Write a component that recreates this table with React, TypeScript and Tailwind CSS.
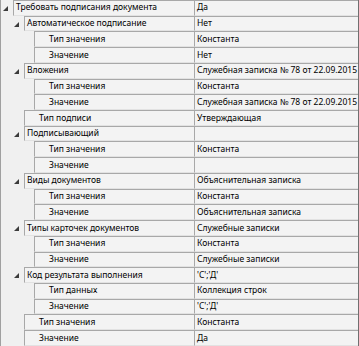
import React from 'react';

type Row = { level: number; label: string; value: string; expandable?: boolean };

const rows: Row[] = [
  { level: 0, label: 'Требовать подписания документа', value: 'Да', expandable: true },
  { level: 1, label: 'Автоматическое подписание', value: 'Нет', expandable: true },
  { level: 2, label: 'Тип значения', value: 'Константа' },
  { level: 2, label: 'Значение', value: 'Нет' },
  { level: 1, label: 'Вложения', value: 'Служебная записка № 78 от 22.09.2015', expandable: true },
  { level: 2, label: 'Тип значения', value: 'Константа' },
  { level: 2, label: 'Значение', value: 'Служебная записка № 78 от 22.09.2015' },
  { level: 1, label: 'Тип подписи', value: 'Утверждающая' },
  { level: 1, label: 'Подписывающий', value: '', expandable: true },
  { level: 2, label: 'Тип значения', value: 'Константа' },
  { level: 2, label: 'Значение', value: '' },
  { level: 1, label: 'Виды документов', value: 'Объяснительная записка', expandable: true },
  { level: 2, label: 'Тип значения', value: 'Константа' },
  { level: 2, label: 'Значение', value: 'Объяснительная записка' },
  { level: 1, label: 'Типы карточек документов', value: 'Служебные записки', expandable: true },
  { level: 2, label: 'Тип значения', value: 'Константа' },
  { level: 2, label: 'Значение', value: 'Служебные записки' },
  { level: 1, label: 'Код результата выполнения', value: "'С';'Д'", expandable: true },
  { level: 2, label: 'Тип данных', value: 'Коллекция строк' },
  { level: 2, label: 'Значение', value: "'С';'Д'" },
  { level: 1, label: 'Тип значения', value: 'Константа' },
  { level: 1, label: 'Значение', value: 'Да' },
];

const indent = ['w-[12px]', 'w-[23px]', 'w-[33px]'];

function Expander() {
  return (
    <svg width="5" height="5" viewBox="0 0 5 5" className="block">
      <polygon points="5,0 5,5 0,5" fill="#3c3c3c" />
    </svg>
  );
}

function PropRow({ row }: { row: Row }) {
  return (
    <div className="flex h-[15.727px] shrink-0">
      <div className={`${indent[row.level]} shrink-0 flex items-center justify-end pr-[5px] pt-[1px]`}>
        {row.expandable && <Expander />}
      </div>
      <div
        className={`w-0 flex-1 flex items-center border-l border-t border-b border-[#a8a8a8] border-b-[#e2e2e2] bg-[#f3f3f3] whitespace-nowrap overflow-hidden ${
          row.expandable ? 'pl-[2px]' : 'pl-[14px]'
        }`}
      >
        {row.label}
      </div>
      <div className="w-[164px] shrink-0 flex items-center border-l border-t border-b border-[#a8a8a8] border-b-[#e2e2e2] bg-[#f3f3f3] pl-[2px] whitespace-nowrap overflow-hidden">
        {row.value}
      </div>
    </div>
  );
}

export default function App() {
  return (
    <div
      className="w-[359px] h-[346px] overflow-hidden flex flex-col bg-[#f0f0f0] border-l border-r border-l-[#a0a0a0] border-r-[#707070] text-[8.5px] text-black"
      style={{ fontFamily: '"Noto Sans", "Liberation Sans", sans-serif' }}
    >
      {rows.map((row, i) => (
        <PropRow key={i} row={row} />
      ))}
    </div>
  );
}
